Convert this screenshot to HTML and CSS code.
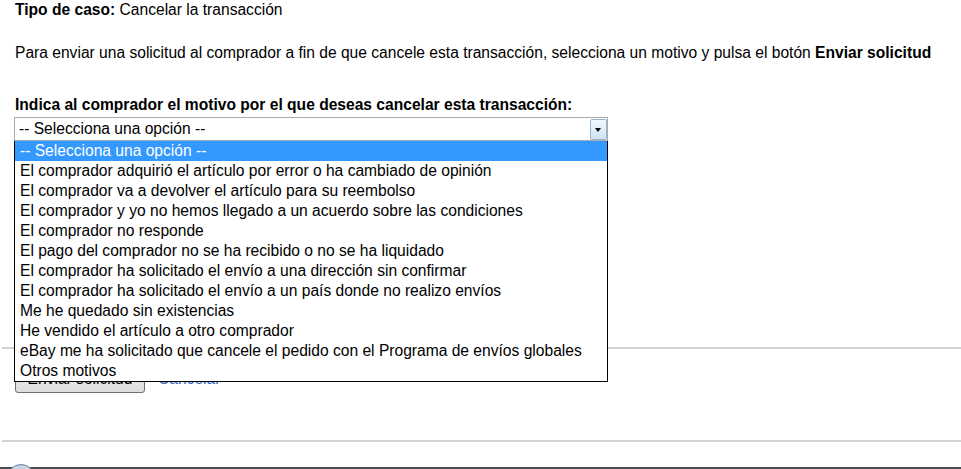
FILE: index.html
```html
<!DOCTYPE html>
<html lang="es">
<head>
    <meta charset="UTF-8">
    <title>Cancelar la transacción</title>
    <link rel="stylesheet" href="styles.css">
</head>
<body>
    <div class="page">
        <p class="case-type"><b>Tipo de caso:</b> Cancelar la transacción</p>

        <p class="intro">Para enviar una solicitud al comprador a fin de que cancele esta transacción, selecciona un motivo y pulsa el botón <b>Enviar solicitud</b></p>

        <label class="reason-label">Indica al comprador el motivo por el que deseas cancelar esta transacción:</label>
        <div class="select-wrap">
            <div class="select-box">
                <span class="select-value">-- Selecciona una opción --</span>
                <span class="select-arrow"></span>
            </div>
            <ul class="select-list">
                <li class="selected">-- Selecciona una opción --</li>
                <li>El comprador adquirió el artículo por error o ha cambiado de opinión</li>
                <li>El comprador va a devolver el artículo para su reembolso</li>
                <li>El comprador y yo no hemos llegado a un acuerdo sobre las condiciones</li>
                <li>El comprador no responde</li>
                <li>El pago del comprador no se ha recibido o no se ha liquidado</li>
                <li>El comprador ha solicitado el envío a una dirección sin confirmar</li>
                <li>El comprador ha solicitado el envío a un país donde no realizo envíos</li>
                <li>Me he quedado sin existencias</li>
                <li>He vendido el artículo a otro comprador</li>
                <li>eBay me ha solicitado que cancele el pedido con el Programa de envíos globales</li>
                <li>Otros motivos</li>
            </ul>
        </div>
    </div>

    <hr class="rule first-rule">

    <div class="actions">
        <button class="send-btn">Enviar solicitud</button>
        <a href="#" class="cancel-link">Cancelar</a>
    </div>

    <hr class="rule second-rule">

    <div class="footer">
        <span class="footer-badge"></span>
    </div>
</body>
</html>
```

FILE: styles.css
```css
body {
    margin: 0;
    font-family: "Liberation Sans", Arial, sans-serif;
    font-size: 15.6px;
    color: #000;
    background: #fff;
    overflow: hidden;
}
.page {
    padding-left: 15px;
}
.case-type {
    margin: 0;
    padding-top: 1px;
    line-height: 18px;
}
.intro {
    margin: 25px 0 0 0;
    line-height: 18px;
}
.reason-label {
    display: block;
    margin-top: 34px;
    font-weight: bold;
    line-height: 18px;
}
.select-wrap {
    position: relative;
    width: 594px;
    margin-top: 3px;
    margin-left: -1px;
}
.select-box {
    height: 24px;
    border: 1px solid #a5acb5;
    display: flex;
    align-items: center;
    justify-content: space-between;
    box-sizing: border-box;
}
.select-value {
    padding-left: 4px;
}
.select-arrow {
    width: 17px;
    height: 21px;
    margin-right: 0;
    border: 1px solid #9db3cc;
    border-radius: 2px;
    background: linear-gradient(#f2f8fd, #cfe2f3);
    position: relative;
    box-sizing: border-box;
}
.select-arrow::after {
    content: "";
    position: absolute;
    left: 4px;
    top: 8px;
    border-left: 3.5px solid transparent;
    border-right: 3.5px solid transparent;
    border-top: 4px solid #000;
}
.select-list {
    position: absolute;
    top: 24px;
    left: 0;
    width: 594px;
    margin: 0;
    padding: 0;
    list-style: none;
    background: #fff;
    border: 1px solid #000;
    border-top: none;
    box-sizing: border-box;
    z-index: 2;
}
.select-list li {
    height: 20px;
    line-height: 20px;
    padding-left: 5px;
    white-space: nowrap;
}
.select-list li.selected {
    background: #3399ff;
    color: #fff;
}
.rule {
    border: none;
    border-top: 2px solid #d3d3d3;
    margin: 0 0 0 2px;
}
.first-rule {
    margin-top: 206px;
}
.actions {
    padding: 16px 0 0 15px;
    display: flex;
    align-items: center;
    gap: 13px;
}
.send-btn {
    font-family: "Liberation Sans", Arial, sans-serif;
    font-size: 15.6px;
    height: 28px;
    width: 130px;
    padding: 0;
    border: 1px solid #707070;
    border-radius: 3px;
    background: linear-gradient(#f2f2f2, #dcdcdc);
    color: #000;
}
.cancel-link {
    color: #2a62c0;
    text-decoration: none;
}
.second-rule {
    margin-top: 47px;
}
.footer {
    margin-top: 25px;
    border-top: 2px solid #4a4f55;
    height: 20px;
    position: relative;
}
.footer-badge {
    position: absolute;
    left: 7px;
    top: -5px;
    width: 26px;
    height: 26px;
    border-radius: 50%;
    background: #c9d6e3;
    border: 1px solid #6c8199;
}
```
